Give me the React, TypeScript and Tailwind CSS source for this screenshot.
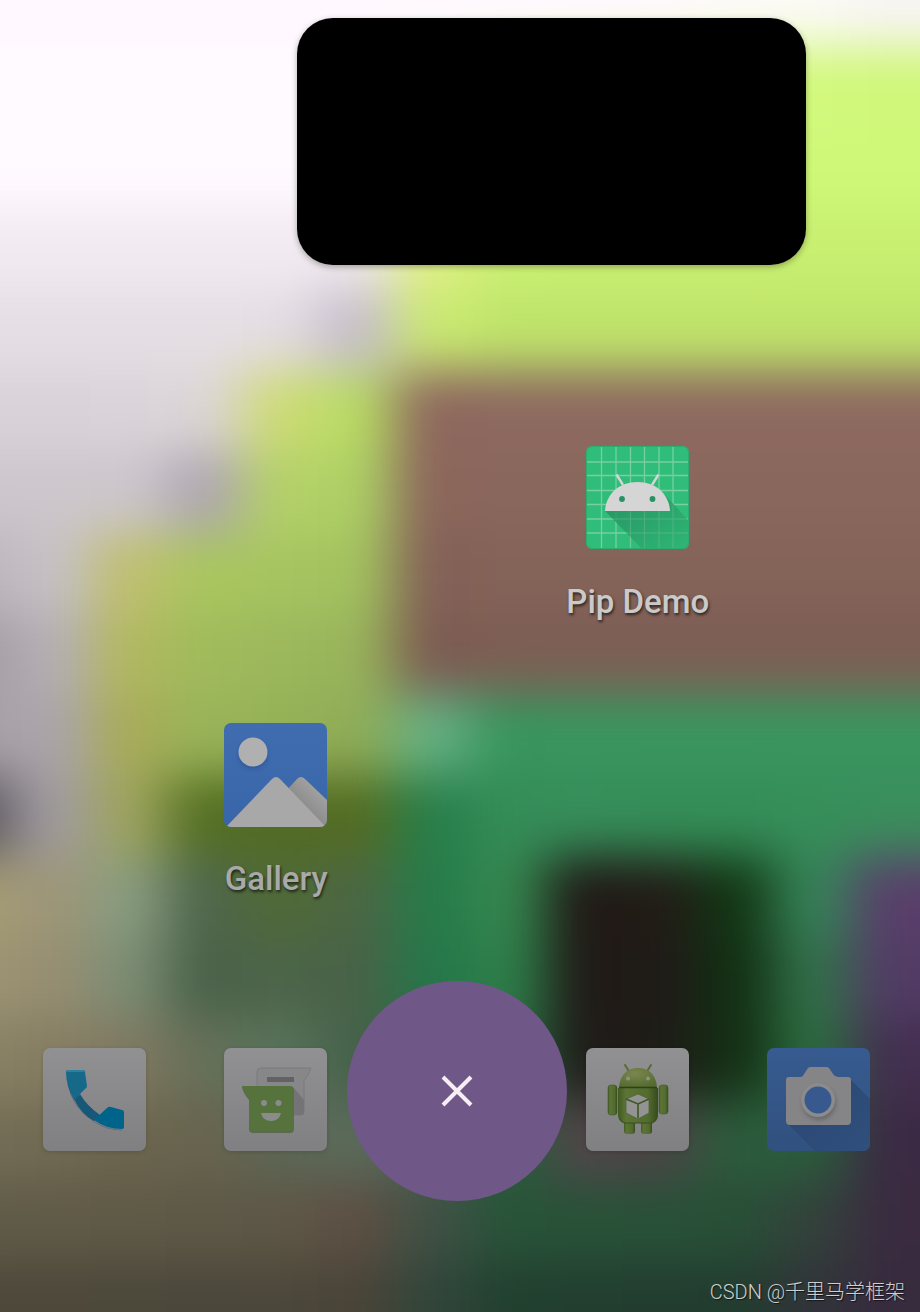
import type { ReactNode } from "react";

// Colour cells of the wallpaper, one string per row, softened by a blur.
const wallpaper: string[] = [
  "fff9ff fff9ff fff9ff fff9ff fff9ff fff9ff fff9ff fff9ff fff9ff fff9fd fdfaf8 fcfaf6 f8f5f4",
  "fffaff fffaff fffaff fffaff fffaff fffaff f4fbd8 e0fa9c d8fa88 d3f97e d2f97c d2f97c d0f77a",
  "fffaff fffaff fffaff fffaff fffaff fffaff e8f8a8 d2f87c d0f87a d0f87a d0f87a cff878 cff878",
  "f1ebf1 f1ebf1 f1ebf1 f1ebf1 f1ebf1 f0e8ee e0f084 caf074 c9ef72 c9ef72 c9ef72 c8ef70 c8ef70",
  "e5dfe5 e5dfe5 e5dfe5 e5dfe5 e4dce2 c6bdcb cae972 bfe46a bfe46a bfe46a bfe46a bfe46a bfe46a",
  "d9d3d9 d9d3d9 dad3d9 dcd5d6 cddb74 b8dc64 8e675e 8d695f 8d695f 8d695f 8d695f 8d695f 8d695f",
  "cdc7cd cdc7cd ccc6cc afa6b2 b4d168 add065 8b655b 8a675c 8a675c 8a675c 8a675c 8a675c 8a675c",
  "bcb6bc c6c0c6 c0bf70 a9c65f a6c560 a3c25f 836057 846359 846359 846359 846359 846359 846359",
  "a39da3 b5aeb5 b2b85f a0bb5b 9cb85c 98b45b 7c5b52 7d5e54 7d5e54 7d5e54 7d5e54 7d5e54 7d5e54",
  "a8a0a6 aba4ab a8ab58 99b359 95b157 8fac57 65b083 38955d 39955e 39955e 39955e 39955e 39955e",
  "5b565e a09ba1 9ea45e 547022 526b24 546c22 277e4a 348c57 368d59 348d57 348d57 368e59 3a8e5c",
  "a59c74 9e9678 899c80 4f664c 4f6a36 4c6644 257b49 35874f 201916 221c16 123614 358458 593f6b",
  "9d9472 978e72 7b8d74 4a6149 4c6449 486247 25774a 2e7f4a 201a17 1f1b17 122f13 317049 523c65",
  "898265 857d62 807860 667059 58735b 46614a 2a6540 2c7045 201c19 1e1c17 142f14 2b6c3e 432f50",
  "746d56 716a53 6c664f 68644f 5d6754 5b6b5b 4c6152 275f3c 52454a 4c4445 2b5c3b 2a5d3d 3b2a44",
  "605b48 605a48 5f5947 5e5847 5e5747 5d4f43 405045 285339 285238 285138 284f37 33423b 3a2b40",
  "4d483a 4d483a 4c483a 4b473a 4b473a 4a4438 31453a 22402f 223e2f 223d2f 223c2f 303439 372b3e",
];

function Wallpaper() {
  return (
    <svg className="absolute inset-0 h-full w-full" viewBox="0 0 920 1312" preserveAspectRatio="none" aria-hidden="true">
      <defs>
        <filter id="soft" x="-20%" y="-20%" width="140%" height="140%" colorInterpolationFilters="sRGB">
          <feGaussianBlur stdDeviation="27 24" />
        </filter>
      </defs>
      <g filter="url(#soft)">
        {wallpaper.map((row, r) =>
          row.split(" ").map((color, c) => {
            const x = c === 0 ? -120 : 14 + (c - 1) * 76;
            const y = r === 0 ? -120 : 46 + (r - 1) * 81;
            return (
              <rect
                key={`${r}-${c}`}
                x={x}
                y={y}
                width={c === 0 ? 135 : c === 12 ? 220 : 77}
                height={r === 0 ? 167 : r === 16 ? 220 : 82}
                fill={`#${color}`}
              />
            );
          }),
        )}
      </g>
    </svg>
  );
}

function PipDemoIcon() {
  return (
    <svg className="size-26" viewBox="1 1 104 104" aria-hidden="true">
      <defs>
        <linearGradient id="pipShade" x1="0" y1="0" x2="1" y2="1">
          <stop offset="0" stopColor="#258a5c" />
          <stop offset="1" stopColor="#2eb575" />
        </linearGradient>
        <clipPath id="pipClip"><rect x="1" y="1" width="103" height="103" rx="6" /></clipPath>
      </defs>
      <rect x="1" y="1" width="103" height="103" rx="6" fill="#2fbd79" />
      <g clipPath="url(#pipClip)">
        <path d="M16.500 0v104M31 0v104M45.500 0v104M59.500 0v104M74 0v104M88 0v104M0 17h104M0 30.500h104M0 45.500h104M0 59.500h104M0 74h104M0 88h104" stroke="#77cfa2" strokeWidth="1.300" fill="none" />
        <path d="M20 66 57 104h47V76L80 50Z" fill="url(#pipShade)" opacity=".82" />
        <path d="M45.500 66v38M59.500 66v38M74 66v38M88 60v44M28 74h76M42 88h62" stroke="#65b98e" strokeOpacity=".4" />
      </g>
      <path d="M31.500 29.500 38 40M73.500 29.500 67 40" stroke="#d5d5d5" strokeWidth="2.400" />
      <path d="M20 66C21 49 34 37 52.500 37S84 49 85 66Z" fill="#d5d5d5" />
      <circle cx="37" cy="54" r="2.900" fill="#299264" />
      <circle cx="67.500" cy="54" r="2.900" fill="#299264" />
      <rect x="1.500" y="1.500" width="102" height="102" rx="6" fill="none" stroke="#29ad70" />
    </svg>
  );
}

function GalleryIcon() {
  return (
    <svg className="size-26" viewBox="0 0 104 104" aria-hidden="true">
      <defs>
        <clipPath id="galClip"><rect width="103" height="104" rx="7" /></clipPath>
        <linearGradient id="galBg" x2="0" y2="1"><stop stopColor="#406cb0" /><stop offset="1" stopColor="#3965a9" /></linearGradient>
        <linearGradient id="galHill" gradientUnits="userSpaceOnUse" x1="78" y1="82" x2="92" y2="68"><stop stopColor="#8c8c8c" /><stop offset="1" stopColor="#9f9f9f" /></linearGradient>
        <filter id="galSoft"><feGaussianBlur stdDeviation="2" /></filter>
      </defs>
      <g clipPath="url(#galClip)">
        <rect width="104" height="104" fill="url(#galBg)" />
        <circle cx="29" cy="32" r="14" fill="#284f8d" opacity=".6" filter="url(#galSoft)" />
        <circle cx="29" cy="29" r="14.500" fill="#b0b0b0" />
        <path d="M50 81 73 56Q77 52 81 56L104 78V104H50Z" fill="url(#galHill)" />
        <path d="M2 104 48 56Q52 52 56 56L102 104Z" fill="#a8a8a8" />
      </g>
    </svg>
  );
}

function Tile({ children }: { children: ReactNode }) {
  return (
    <svg className="size-26 drop-shadow-sm" viewBox="0 0 104 104" aria-hidden="true">
      <defs>
        <linearGradient id="tileBg" x2="0" y2="1"><stop stopColor="#919193" /><stop offset="1" stopColor="#808083" /></linearGradient>
      </defs>
      <rect width="103" height="103" rx="7" fill="url(#tileBg)" />
      {children}
    </svg>
  );
}

function PhoneIcon() {
  return (
    <Tile>
      <path d="M31 51 37 46Q44 58 57 67L51 73Q38 66 31 51Z" fill="#175778" />
      <path d="M25 22H40Q42 22 42 24L44 38Q44 40 42 41L31 52Q23 38 23 24Q23 22 25 22Z" fill="#17698a" />
      <path d="M24 22H41V24H24Z" fill="#2c80a0" />
      <path d="M51 72 64 60Q66 58 68 59L79 62Q81 62 81 65V79Q81 81 79 81Q63 81 51 72Z" fill="#00638a" />
      <path d="M25 36Q29 60 51 73.500Q63 82 79 82" fill="none" stroke="#204958" strokeOpacity=".35" />
    </Tile>
  );
}

function MessagesIcon() {
  return (
    <Tile>
      <path d="M37 20H87Q85 26 80 33V64Q80 67 77 67H37Q33 67 33 63V24Q33 20 37 20Z" fill="#878789" stroke="#777779" strokeWidth=".8" />
      <path d="M70 40 80 52V63Q80 67 77 67H70Z" fill="#747476" />
      <path d="M43 29H70V34H43Z" fill="#626264" />
      <path d="M18 39H66Q70 39 70 43V81Q70 85 66 85H29Q25 85 25 81V52Q19 45 18 39Z" fill="#435534" opacity=".6" />
      <path d="M18 38H66Q70 38 70 42V79Q70 83 66 83H29Q25 83 25 79V51Q19 45 18 38Z" fill="#56733e" />
      <circle cx="40" cy="55" r="3" fill="#8b8b8c" />
      <circle cx="54.500" cy="55" r="3" fill="#8b8b8c" />
      <path d="M37 65H57Q55 73 47 73T37 65Z" fill="#8b8b8c" />
    </Tile>
  );
}

function AndroidIcon() {
  return (
    <Tile>
      <defs>
        <linearGradient id="robot" x2="1"><stop stopColor="#405a20" /><stop offset=".2" stopColor="#5d7436" /><stop offset=".75" stopColor="#536b2e" /><stop offset="1" stopColor="#354b1d" /></linearGradient>
        <radialGradient id="robotHead" cx=".42" cy=".3" r=".75"><stop stopColor="#7c8650" /><stop offset="1" stopColor="#536b2e" /></radialGradient>
      </defs>
      <path d="M39 17 44 25M65 17 60 25" stroke="#536e2f" strokeWidth="2" strokeLinecap="round" />
      <rect x="22" y="37" width="9" height="30" rx="3" fill="url(#robot)" stroke="#41582b" strokeWidth=".6" />
      <rect x="73" y="37" width="9" height="29" rx="3" fill="url(#robot)" stroke="#41582b" strokeWidth=".6" />
      <rect x="38" y="68" width="11" height="18" rx="3" fill="url(#robot)" />
      <rect x="55" y="68" width="11" height="18" rx="3" fill="url(#robot)" />
      <path d="M32 40H72V68Q71 75 65 75H39Q33 75 32 68Z" fill="url(#robot)" />
      <path d="M33 39C34 27 41 20 52 20S70 27 71 39Z" fill="url(#robotHead)" />
      <path d="M33 39.500H71" stroke="#2c4119" strokeWidth="1.600" />
      <path d="M34 70Q35 75 40 75H65Q69 75 70 70" fill="none" stroke="#39511f" />
      <circle cx="42" cy="30.500" r="2" fill="#8d918a" />
      <circle cx="62" cy="30.500" r="2" fill="#8d918a" />
      <path d="M40 51 52 46 63 51V65L52 71 40 65Z" fill="#939393" stroke="#496129" strokeWidth=".7" />
      <path d="M40 51 52 56 63 51M52 56V70" fill="none" stroke="#405625" strokeWidth="1.600" />
    </Tile>
  );
}

function CameraIcon() {
  return (
    <svg className="size-26" viewBox="0 0 104 104" aria-hidden="true">
      <defs>
        <linearGradient id="camBg" x2="0" y2="1"><stop stopColor="#375b90" /><stop offset="1" stopColor="#31517f" /></linearGradient>
        <linearGradient id="camShade" x1=".3" y1=".4" x2="1" y2="1"><stop stopColor="#2d4a76" /><stop offset="1" stopColor="#304f7c" /></linearGradient>
        <clipPath id="camClip"><rect width="103" height="103" rx="7" /></clipPath>
        <filter id="camSoft"><feGaussianBlur stdDeviation="2" /></filter>
      </defs>
      <g clipPath="url(#camClip)">
        <rect width="104" height="104" fill="url(#camBg)" />
        <path d="M21 76 49 104H104V52L83 31V76Z" fill="url(#camShade)" />
      </g>
      <path d="M22 29H33Q36 29 37 26L41 20Q42 19 44 19H59Q61 19 62 20L66 26Q68 29 71 29H81Q84 29 84 32V73Q84 77 80 77H23Q19 77 19 73V32Q19 29 22 29Z" fill="#858587" />
      <circle cx="52" cy="55" r="17" fill="#5f5f61" opacity=".75" filter="url(#camSoft)" />
      <circle cx="51" cy="52" r="17" fill="#8b8b8d" />
      <circle cx="51" cy="52" r="13.500" fill="#38598d" />
    </svg>
  );
}

function AppShortcut({ label, className, children }: { label: string; className: string; children: ReactNode }) {
  return (
    <button type="button" className={`flex flex-col items-center ${className}`}>
      {children}
      <span className="mt-8 text-[33px] leading-10 font-medium [text-shadow:1px_2px_3px_rgba(0,0,0,0.65)]">{label}</span>
    </button>
  );
}

export default function App() {
  return (
    <main className="relative isolate flex min-h-screen flex-col overflow-hidden bg-[#605a48] font-['Roboto',sans-serif]">
      <div className="absolute inset-0 -z-10"><Wallpaper /></div>

      <section aria-label="Picture in picture" className="mt-[18px] ml-[32.3%] h-[247px] w-[55.3%] rounded-[36px] bg-black shadow-[0_2px_6px_rgba(0,0,0,0.3)]" />

      <div className="mt-[181px] grid grid-cols-5 pr-[11px] pl-[5px]">
        <AppShortcut label="Pip Demo" className="col-start-4 text-[#cacaca]"><PipDemoIcon /></AppShortcut>
      </div>
      <div className="mt-[101px] grid grid-cols-5 pr-[11px] pl-[5px]">
        <AppShortcut label="Gallery" className="col-start-2 text-[#a9a9a9]"><GalleryIcon /></AppShortcut>
      </div>

      <div className="relative mt-[149px] mr-[11px] ml-[5px]">
        <nav aria-label="Dock" className="grid grid-cols-5 justify-items-center">
          <button type="button" aria-label="Phone"><PhoneIcon /></button>
          <button type="button" aria-label="Messages"><MessagesIcon /></button>
          <button type="button" aria-label="Android" className="col-start-4"><AndroidIcon /></button>
          <button type="button" aria-label="Camera"><CameraIcon /></button>
        </nav>
        <button type="button" aria-label="Dismiss" className="absolute -top-[67px] left-1/2 flex size-[220px] -translate-x-1/2 items-center justify-center rounded-full bg-[#6f5788]">
          <svg className="size-8" viewBox="0 0 32 32" aria-hidden="true">
            <path d="M2 2 30 30M30 2 2 30" stroke="#f6eef4" strokeWidth="4" />
          </svg>
        </button>
      </div>

      <footer className="mt-auto pr-[15px] pb-1 text-right font-['Roboto','Noto_Sans_CJK_SC',sans-serif] text-[20px] leading-8 font-light text-[#cfcfcf] [text-shadow:1px_1px_1px_rgba(0,0,0,0.6)]">
        CSDN @千里马学框架
      </footer>
    </main>
  );
}
